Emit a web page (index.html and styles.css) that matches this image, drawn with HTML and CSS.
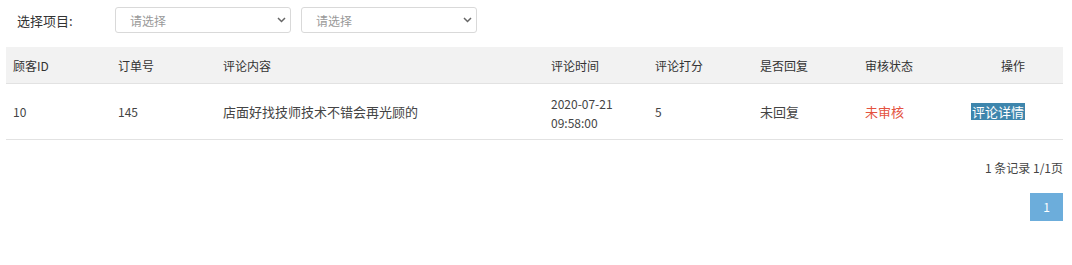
FILE: index.html
```html
<!DOCTYPE html>
<html>
<head>
    <title>评论管理</title>
    <link rel="stylesheet" href="styles.css">
</head>
<body>
    <div class="filter">
        <label class="filter-label">选择项目:</label>
        <div class="select-box first">
            <span>请选择</span>
            <svg class="chevron" width="9" height="6" viewBox="0 0 9 6"><path d="M1 1 L4.5 4.5 L8 1" fill="none" stroke="#666" stroke-width="1.5"/></svg>
        </div>
        <div class="select-box">
            <span>请选择</span>
            <svg class="chevron" width="9" height="6" viewBox="0 0 9 6"><path d="M1 1 L4.5 4.5 L8 1" fill="none" stroke="#666" stroke-width="1.5"/></svg>
        </div>
    </div>

    <table class="list">
        <thead>
            <tr>
                <th class="c-id">顾客ID</th>
                <th class="c-order">订单号</th>
                <th class="c-content">评论内容</th>
                <th class="c-time">评论时间</th>
                <th class="c-score">评论打分</th>
                <th class="c-reply">是否回复</th>
                <th class="c-status">审核状态</th>
                <th class="c-op">操作</th>
            </tr>
        </thead>
        <tbody>
            <tr>
                <td class="num">10</td>
                <td class="num">145</td>
                <td>店面好找技师技术不错会再光顾的</td>
                <td class="num time">2020-07-21<br>09:58:00</td>
                <td class="num">5</td>
                <td>未回复</td>
                <td class="unchecked">未审核</td>
                <td class="c-op"><span class="btn-detail">评论详情</span></td>
            </tr>
        </tbody>
    </table>

    <div class="pager">
        <div class="pager-info">1 条记录 1/1页</div>
        <span class="page-num">1</span>
    </div>
</body>
</html>
```

FILE: styles.css
```css
body { margin: 0; font-family: "Noto Sans CJK SC", "Open Sans", sans-serif; font-size: 12px; color: #333; background: #fff; }
.filter { display: flex; align-items: center; padding: 7px 0 0 17px; height: 26px; }
.filter-label { width: 98px; font-size: 13px; color: #333; }
.select-box {
    box-sizing: border-box;
    width: 176px;
    height: 26px;
    border: 1px solid #d9d9d9;
    border-radius: 3px;
    display: flex;
    align-items: center;
    justify-content: space-between;
    padding: 0 4px 0 14px;
    color: #999;
    font-size: 12px;
}
.select-box.first { margin-right: 10px; }
.chevron { display: block; }

.list { margin: 14px 0 0 6px; width: 1057px; border-collapse: collapse; table-layout: fixed; }
.list th { background: #f2f2f2; height: 36px; font-weight: normal; text-align: left; padding: 0 7px; border-bottom: 1px solid #e2e2e2; color: #333; font-size: 12px; }
.list td { height: 53px; padding: 0 7px; border-bottom: 1px solid #e2e2e2; color: #444; font-size: 13px; }
.list td.num { font-size: 12px; }
.c-id, .c-order, .c-score, .c-reply, .c-status { width: 91px; }
.c-content { width: 314px; }
.c-time { width: 90px; }
.list td.time { line-height: 19px; padding-top: 2px; }
.list .c-op { text-align: right; padding: 0 38px 0 0; white-space: nowrap; }
.list td.unchecked { color: #e4533f; }
.btn-detail { display: inline-block; background: #3e86ad; color: #fff; font-size: 13px; line-height: 17px; padding: 0 1px; }

.pager { width: 1057px; margin-left: 6px; display: flex; flex-direction: column; align-items: flex-end; }
.pager-info { margin-top: 19px; font-size: 12px; color: #444; line-height: 17px; }
.page-num { margin-top: 17px; width: 33px; height: 28px; background: #6caddb; color: #fff; text-align: center; line-height: 28px; font-size: 12px; }
```
